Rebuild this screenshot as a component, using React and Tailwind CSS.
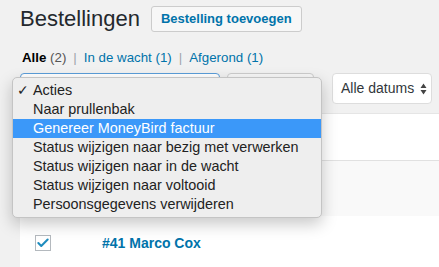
import { Check } from "lucide-react";

const acties = [
  "Acties",
  "Naar prullenbak",
  "Genereer MoneyBird factuur",
  "Status wijzigen naar bezig met verwerken",
  "Status wijzigen naar in de wacht",
  "Status wijzigen naar voltooid",
  "Persoonsgegevens verwijderen",
];

function ActionMenu() {
  return (
    <div className="absolute left-[-9px] top-[3px] z-10 w-[310px] rounded-[5px] border border-[#c4c4c4] bg-[#eeeeee] py-[3px] shadow-[0_6px_16px_rgba(0,0,0,0.22)]">
      {acties.map((a, i) => {
        const active = i === 2;
        return (
          <div
            key={a}
            className={
              active
                ? "flex h-[19px] items-center bg-[#3b98f9] pl-[20px] text-[14.4px] text-white"
                : "relative flex h-[19px] items-center pl-[20px] text-[14.4px] text-[#222]"
            }
          >
            {i === 0 && <span className="absolute left-[4px] text-[14px]">✓</span>}
            {a}
          </div>
        );
      })}
    </div>
  );
}

export default function App() {
  return (
    <div
      className="relative h-[267px] w-[439px] overflow-hidden bg-[#f1f1f1] text-[#23282d]"
      style={{ fontFamily: '"Liberation Sans", Arial, sans-serif' }}
    >
      <div className="flex items-center pl-5 pt-[4px]">
        <h1 className="text-[22px] leading-[29px] font-normal text-[#23282d]">Bestellingen</h1>
        <button className="ml-[11px] h-[26px] rounded-[3px] border border-[#cccccc] bg-[#f7f7f7] px-[9px] text-[13px] font-semibold text-[#0073aa]">
          Bestelling toevoegen
        </button>
      </div>

      <ul className="mt-[16px] flex pl-[22px] text-[13.3px] leading-[18px] text-[#555]">
        <li>
          <b className="text-black">Alle</b> (2)
          <span className="px-[7px] text-[#a0a5aa]">|</span>
        </li>
        <li>
          <span className="text-[#0073aa]">In de wacht (1)</span>
          <span className="px-[7px] text-[#a0a5aa]">|</span>
        </li>
        <li>
          <span className="text-[#0073aa]">Afgerond (1)</span>
        </li>
      </ul>

      <div className="mt-[6px] flex h-[31px] pl-5">
        <div className="relative h-[31px] w-[200px] rounded-[4px] border border-[#5b9dd9] bg-white">
          <ActionMenu />
        </div>
        <button className="ml-[7px] h-[31px] w-[87px] rounded-[4px] border border-[#cccccc] bg-[#f7f7f7] text-[13px]">
          Toepassen
        </button>
        <div className="ml-[18px] flex h-[31px] w-[100px] items-center justify-between rounded-[4px] border border-[#dddddd] bg-white pl-[8px] pr-[4px] text-[14px] text-[#32373c]">
          Alle datums
          <svg width="7" height="12" viewBox="0 0 7 12">
            <path d="M3.5 0.5 L6.5 5 L0.5 5 Z M3.5 11.5 L6.5 7 L0.5 7 Z" fill="#444" />
          </svg>
        </div>
      </div>

      <div className="ml-5 mt-[9px] border-t border-[#e5e5e5] bg-white">
        <div className="h-[47px] border-b border-[#e1e1e1]" />
        <div className="h-[55px] bg-[#f9f9f9]" />
        <div className="flex h-[60px] items-start pt-[19px]">
          <div className="ml-[15px] flex h-[16px] w-[16px] items-center justify-center border border-[#b4b9be] bg-white">
            <Check size={14} strokeWidth={3.5} className="text-[#1e8cbe]" />
          </div>
          <span className="ml-[51px] text-[14px] leading-[16px] font-semibold text-[#0073aa]">#41 Marco Cox</span>
        </div>
      </div>
    </div>
  );
}
